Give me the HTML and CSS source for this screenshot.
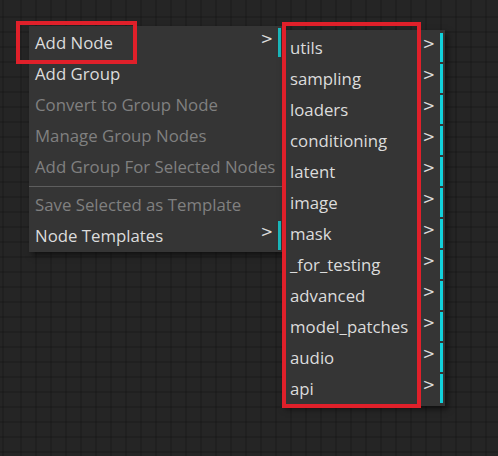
FILE: index.html
```html
<!DOCTYPE html>
<html>
<head>
<meta charset="utf-8">
<link rel="stylesheet" href="styles.css">
</head>
<body>
<div class="canvas">
  <div class="menu main-menu">
    <div class="entry sub">Add Node</div>
    <div class="entry">Add Group</div>
    <div class="entry disabled">Convert to Group Node</div>
    <div class="entry disabled">Manage Group Nodes</div>
    <div class="entry disabled">Add Group For Selected Nodes</div>
    <div class="separator"></div>
    <div class="entry disabled">Save Selected as Template</div>
    <div class="entry sub">Node Templates</div>
  </div>
  <div class="menu sub-menu">
    <div class="entry sub">utils</div>
    <div class="entry sub">sampling</div>
    <div class="entry sub">loaders</div>
    <div class="entry sub">conditioning</div>
    <div class="entry sub">latent</div>
    <div class="entry sub">image</div>
    <div class="entry sub">mask</div>
    <div class="entry sub">_for_testing</div>
    <div class="entry sub">advanced</div>
    <div class="entry sub">model_patches</div>
    <div class="entry sub">audio</div>
    <div class="entry sub">api</div>
  </div>
  <div class="mark mark-node"></div>
  <div class="mark mark-sub"></div>
</div>
</body>
</html>
```
FILE: styles.css
```css
html, body {
  margin: 0;
  padding: 0;
}
body {
  width: 498px;
  height: 456px;
  overflow: hidden;
  background: #242424;
}
.canvas {
  position: relative;
  width: 498px;
  height: 456px;
  background-color: #252525;
  background-image:
    repeating-linear-gradient(90deg, transparent 0 13px, rgba(0,0,0,0.13) 13px 15px),
    repeating-linear-gradient(0deg, transparent 0 13px, rgba(0,0,0,0.13) 13px 15px);
  background-position: 7px 10px, 0 10px;
  font-family: "Open Sans", "Noto Sans", sans-serif;
  font-size: 16.8px;
}
.menu {
  position: absolute;
  display: flex;
  flex-direction: column;
  gap: 2px;
  background: #353535;
  box-shadow: 3px 3px 6px rgba(0, 0, 0, 0.55);
  box-sizing: border-box;
}
.main-menu {
  left: 29px;
  top: 26px;
  width: 254px;
  padding: 2px 0 2px 0;
}
.sub-menu {
  left: 282px;
  top: 30px;
  width: 163px;
  padding: 3px 0 3px 0;
}
.entry {
  position: relative;
  height: 29px;
  line-height: 30px;
  padding-left: 6px;
  color: #dcdcdc;
  white-space: nowrap;
}
.sub-menu .entry {
  padding-left: 8px;
}
.entry.disabled {
  color: #808080;
}
.entry.sub {
  margin-right: 2px;
  border-right: 3px solid #12d2dc;
}
.main-menu .entry.sub {
  border-right-color: #1ab8bc;
}
.entry.sub::after {
  content: ">";
  position: absolute;
  right: 5px;
  top: -4px;
  font-family: "DejaVu Sans", sans-serif;
  font-size: 15px;
  color: #dcdcdc;
}
.separator {
  height: 1px;
  margin: 3px 0 1px 0;
  background: #5e5e5e;
}
.mark {
  position: absolute;
  border: 4.5px solid #e0202a;
  box-sizing: border-box;
}
.mark-node {
  left: 16px;
  top: 21px;
  width: 121px;
  height: 43px;
}
.mark-sub {
  left: 282px;
  top: 22px;
  width: 139px;
  height: 386px;
}
```
